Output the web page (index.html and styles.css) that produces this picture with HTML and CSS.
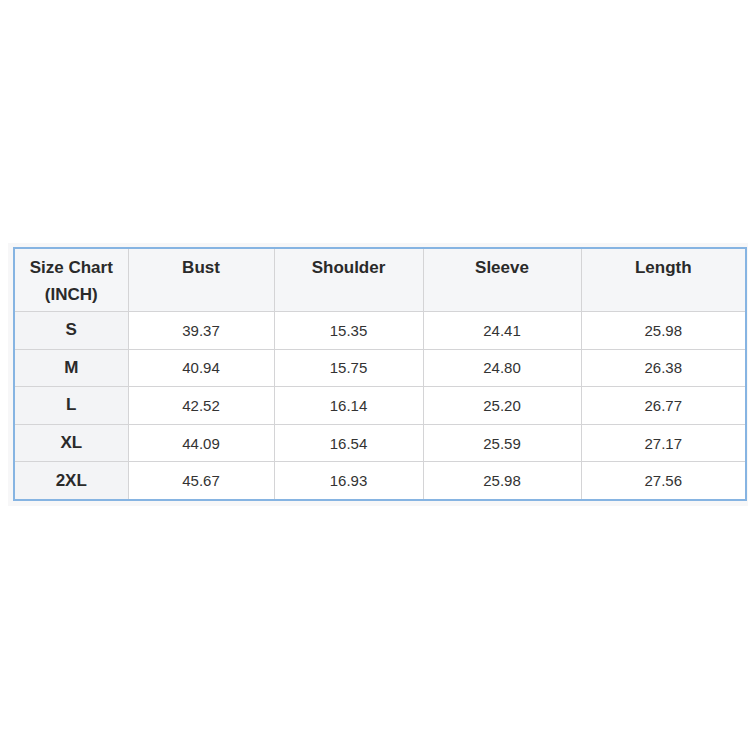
FILE: index.html
```html
<!DOCTYPE html>
<html>
<head>
<meta charset="utf-8">
<link rel="stylesheet" href="styles.css">
</head>
<body>
<div class="frame">
  <table class="chart">
    <colgroup>
      <col class="c1"><col class="c2"><col class="c3"><col class="c4"><col class="c5">
    </colgroup>
    <thead>
      <tr>
        <th>Size Chart<br>(INCH)</th>
        <th>Bust</th>
        <th>Shoulder</th>
        <th>Sleeve</th>
        <th>Length</th>
      </tr>
    </thead>
    <tbody>
      <tr><th>S</th><td>39.37</td><td>15.35</td><td>24.41</td><td>25.98</td></tr>
      <tr><th>M</th><td>40.94</td><td>15.75</td><td>24.80</td><td>26.38</td></tr>
      <tr><th>L</th><td>42.52</td><td>16.14</td><td>25.20</td><td>26.77</td></tr>
      <tr><th>XL</th><td>44.09</td><td>16.54</td><td>25.59</td><td>27.17</td></tr>
      <tr><th>2XL</th><td>45.67</td><td>16.93</td><td>25.98</td><td>27.56</td></tr>
    </tbody>
  </table>
</div>
</body>
</html>
```
FILE: styles.css
```css
html, body {
  margin: 0;
  padding: 0;
  background: #ffffff;
  width: 750px;
  height: 750px;
}
.frame {
  margin: 243px 0 0 8px;
  width: 740px;
  padding: 4px 3px 5px 5px;
  box-sizing: border-box;
  background: #f7f7f8;
}
.chart {
  width: 732px;
  border-collapse: collapse;
  border: 2px solid #86b4e2;
  font-family: "Liberation Sans", Arial, sans-serif;
  color: #333333;
  table-layout: fixed;
}
.c1 { width: 114px; }
.c2 { width: 146px; }
.c3 { width: 149px; }
.c4 { width: 158px; }
.c5 { width: 165px; }
.chart th, .chart td {
  border: 1px solid #d4d4d6;
  text-align: center;
  padding: 0;
}
.chart thead th {
  background: #f5f6f8;
  font-weight: bold;
  font-size: 17px;
  line-height: 27px;
  vertical-align: top;
  padding: 5px 0 3px;
  height: 54px;
  color: #2a2a2a;
}
.chart tbody th {
  background: #f3f4f6;
  font-weight: bold;
  font-size: 17px;
  height: 36.6px;
  color: #2a2a2a;
}
.chart tbody td {
  background: #ffffff;
  font-size: 15px;
  height: 36.6px;
}
```
